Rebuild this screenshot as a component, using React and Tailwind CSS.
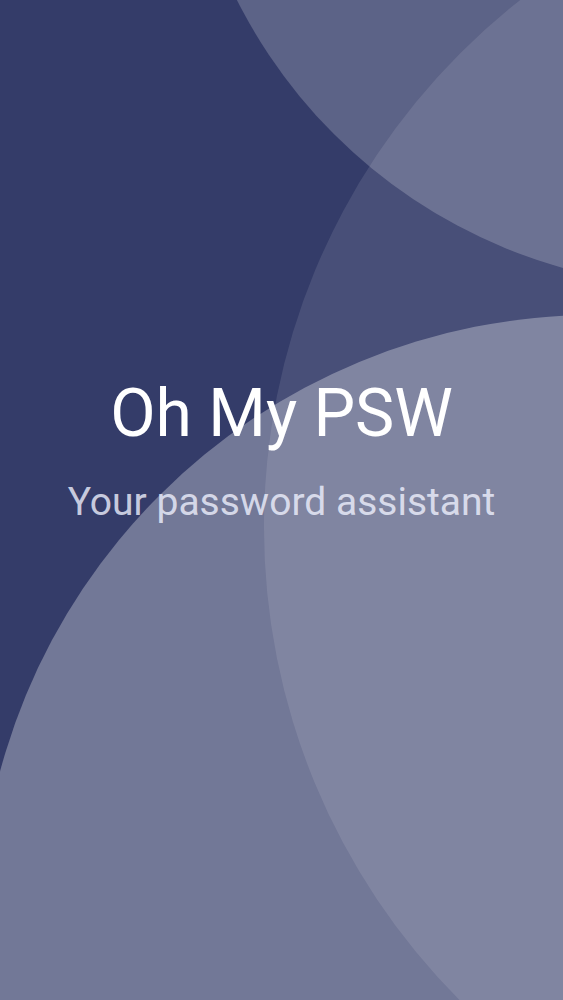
import React from 'react';

const Bubbles = () => (
    <svg
        className="absolute inset-0 w-full h-full"
        viewBox="0 0 563 1000"
        preserveAspectRatio="none"
        aria-hidden="true"
    >
        <circle cx="934" cy="527" r="670" fill="#ffffff" fillOpacity="0.1" />
        <circle cx="703" cy="-235" r="522" fill="#ffffff" fillOpacity="0.2" />
        <circle cx="595" cy="931" r="616" fill="#ffffff" fillOpacity="0.31" />
    </svg>
);

export default function App() {
    return (
        <div className="relative w-full h-[1000px] overflow-hidden bg-[#343c69] font-['Roboto',sans-serif]">
            <Bubbles />

            <div className="relative flex flex-col items-center pt-[376px]">
                <h1 className="text-[66px] leading-[76px] font-normal text-white">
                    Oh My PSW
                </h1>
                <p className="mt-[27px] text-[39px] leading-[46px] text-[#f0f2ff]/80">
                    Your password assistant
                </p>
            </div>
        </div>
    );
}
